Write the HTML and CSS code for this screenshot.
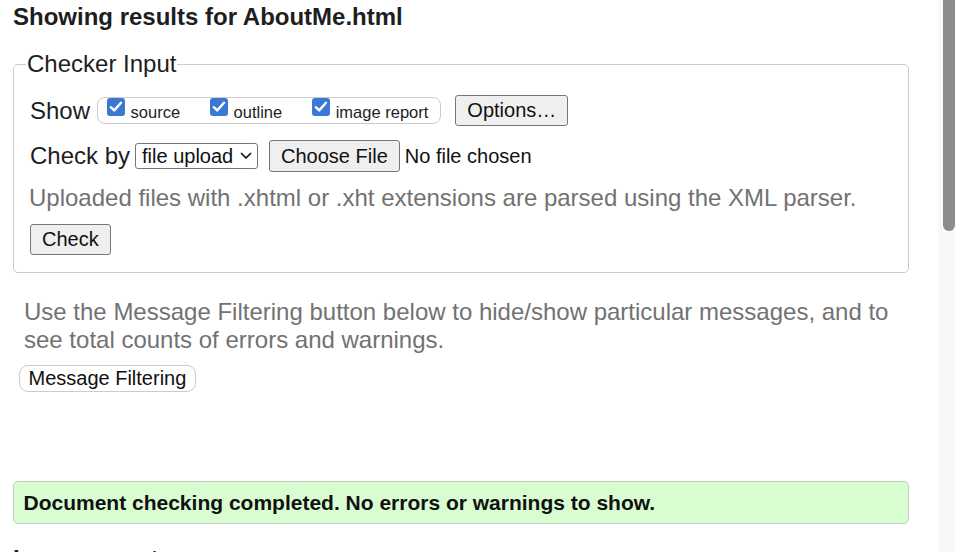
FILE: index.html
```html
<!DOCTYPE html>
<html lang="en">
<head>
<meta charset="utf-8">
<title>Showing results for AboutMe.html</title>
<link rel="stylesheet" href="styles.css">
</head>
<body>
<div class="page">
  <h2 class="title">Showing results for AboutMe.html</h2>
  <fieldset class="checker">
    <legend class="legend">Checker Input</legend>
    <div class="row row-show">
      <span class="label label-show">Show</span>
      <span class="opts">
        <label class="opt"><svg class="cb" viewBox="0 0 18 18" width="18" height="18"><rect x="0" y="0" width="18" height="18" rx="3" fill="#3a78d4"/><path d="M3.8 9.2 L7.2 12.4 L14 4.8" fill="none" stroke="#fff" stroke-width="2.4" stroke-linecap="round" stroke-linejoin="round"/></svg><span class="opt-text">source</span></label>
        <label class="opt"><svg class="cb" viewBox="0 0 18 18" width="18" height="18"><rect x="0" y="0" width="18" height="18" rx="3" fill="#3a78d4"/><path d="M3.8 9.2 L7.2 12.4 L14 4.8" fill="none" stroke="#fff" stroke-width="2.4" stroke-linecap="round" stroke-linejoin="round"/></svg><span class="opt-text">outline</span></label>
        <label class="opt opt-last"><svg class="cb" viewBox="0 0 18 18" width="18" height="18"><rect x="0" y="0" width="18" height="18" rx="3" fill="#3a78d4"/><path d="M3.8 9.2 L7.2 12.4 L14 4.8" fill="none" stroke="#fff" stroke-width="2.4" stroke-linecap="round" stroke-linejoin="round"/></svg><span class="opt-text">image report</span></label>
      </span>
      <button class="btn btn-options" type="button">Options…</button>
    </div>
    <div class="row row-check">
      <span class="label label-check">Check by</span>
      <span class="select-wrap">
        <select class="select"><option>file upload</option></select>
        <svg class="chevron" viewBox="0 0 12 8" width="12" height="8"><path d="M1.5 1.5 L6 6 L10.5 1.5" fill="none" stroke="#111" stroke-width="1.7" stroke-linecap="round" stroke-linejoin="round"/></svg>
      </span>
      <button class="btn btn-file" type="button">Choose File</button>
      <span class="nofile">No file chosen</span>
    </div>
    <p class="note">Uploaded files with .xhtml or .xht extensions are parsed using the XML parser.</p>
    <div class="row row-submit">
      <button class="btn btn-check" type="button">Check</button>
    </div>
  </fieldset>
  <p class="hint">Use the Message Filtering button below to hide/show particular messages, and to see total counts of errors and warnings.</p>
  <button class="btn-filter" type="button">Message Filtering</button>
  <div class="success">Document checking completed. No errors or warnings to show.</div>
  <h2 class="title section-title">Image report</h2>
</div>
<div class="scrollbar"><div class="thumb"></div></div>
</body>
</html>
```

FILE: styles.css
```css
html, body {
  margin: 0;
  padding: 0;
  background: #fff;
  overflow: hidden;
  height: 100%;
}

body {
  font-family: "Liberation Sans", Arial, sans-serif;
  color: #222;
  font-size: 24px;
}

.page {
  padding: 3px 46px 0 13px;
}

.title {
  margin: 0;
  font-size: 24px;
  line-height: 28px;
  font-weight: bold;
  color: #1e1e1e;
}

.checker {
  margin: 19px 0 0 0;
  padding: 0 16px 17px 16px;
  border: 1px solid #cccccc;
  border-radius: 5px;
  min-width: 0;
}

.legend {
  font-size: 24px;
  line-height: 28px;
  padding: 0 1px;
  margin-left: -4px;
  color: #1e1e1e;
}

.row {
  display: flex;
  align-items: center;
}

.row-show {
  margin-top: 17px;
  height: 31px;
}

.label {
  font-size: 24px;
  line-height: 28px;
  color: #1e1e1e;
}

.label-show {
  margin-right: 7px;
}

.label-check {
  margin-right: 5px;
}

.opts {
  display: flex;
  align-items: flex-start;
  box-sizing: border-box;
  height: 27px;
  border: 1px solid #cccccc;
  border-radius: 8px;
  padding: 0 12px 0 9px;
  margin-right: 14px;
}

.opt {
  display: flex;
  align-items: flex-start;
  margin-right: 30px;
}

.opt-last {
  margin-right: 0;
}

.cb {
  display: block;
  width: 18px;
  height: 18px;
  flex: none;
}

.opt-text {
  font-size: 16.5px;
  line-height: 19px;
  margin-top: 5px;
  margin-left: 5.5px;
  color: #1e1e1e;
}

.btn {
  font-family: "Liberation Sans", Arial, sans-serif;
  font-size: 20px;
  color: #111;
  background: #efefef;
  border: 1px solid #767676;
  border-radius: 3px;
  box-sizing: border-box;
  margin: 0;
  line-height: 23px;
}

.btn-options {
  height: 31px;
  padding: 0 11px;
}

.row-check {
  margin-top: 14px;
  height: 32px;
}

.select-wrap {
  position: relative;
  display: block;
  margin-right: 11px;
}

.select {
  display: block;
  -webkit-appearance: none;
  appearance: none;
  font-family: "Liberation Sans", Arial, sans-serif;
  font-size: 20px;
  line-height: 23px;
  width: 123px;
  height: 26px;
  box-sizing: border-box;
  border: 1px solid #767676;
  border-radius: 3px;
  background: #fff;
  color: #111;
  margin: 0;
  padding: 0 0 0 6px;
}

.chevron {
  position: absolute;
  right: 6px;
  top: 9px;
  width: 12px;
  height: 8px;
  pointer-events: none;
}

.btn-file {
  height: 32px;
  padding: 0 11px;
  margin-right: 5px;
}

.nofile {
  font-size: 20px;
  line-height: 23px;
  color: #111;
}

.note {
  margin: 12px 0 0 -1px;
  font-size: 24px;
  line-height: 28px;
  color: #727272;
}

.row-submit {
  margin-top: 12px;
}

.btn-check {
  height: 31px;
  padding: 0 11px;
}

.hint {
  margin: 25px 0 0 11px;
  font-size: 24px;
  line-height: 28px;
  color: #727272;
}

.btn-filter {
  display: block;
  margin: 11px 0 0 6px;
  height: 27px;
  box-sizing: border-box;
  padding: 0 8.5px;
  font-family: "Liberation Sans", Arial, sans-serif;
  font-size: 20px;
  line-height: 23px;
  color: #111;
  background: #fff;
  border: 1px solid #cccccc;
  border-radius: 9px;
}

.success {
  margin-top: 89px;
  padding: 9px 10px 8px 9.5px;
  font-size: 21px;
  line-height: 24px;
  font-weight: bold;
  color: #111;
  background: #d8fdd1;
  border: 1px solid #c8c8c8;
  border-radius: 5px;
}

.section-title {
  margin-top: 21px;
}

.scrollbar {
  position: fixed;
  top: 0;
  right: 0;
  width: 17px;
  height: 100%;
  background: #f8f8f8;
}

.thumb {
  margin-left: 5px;
  width: 12px;
  height: 231px;
  background: #8b8b8b;
  border-radius: 0 0 6px 6px;
}
```
